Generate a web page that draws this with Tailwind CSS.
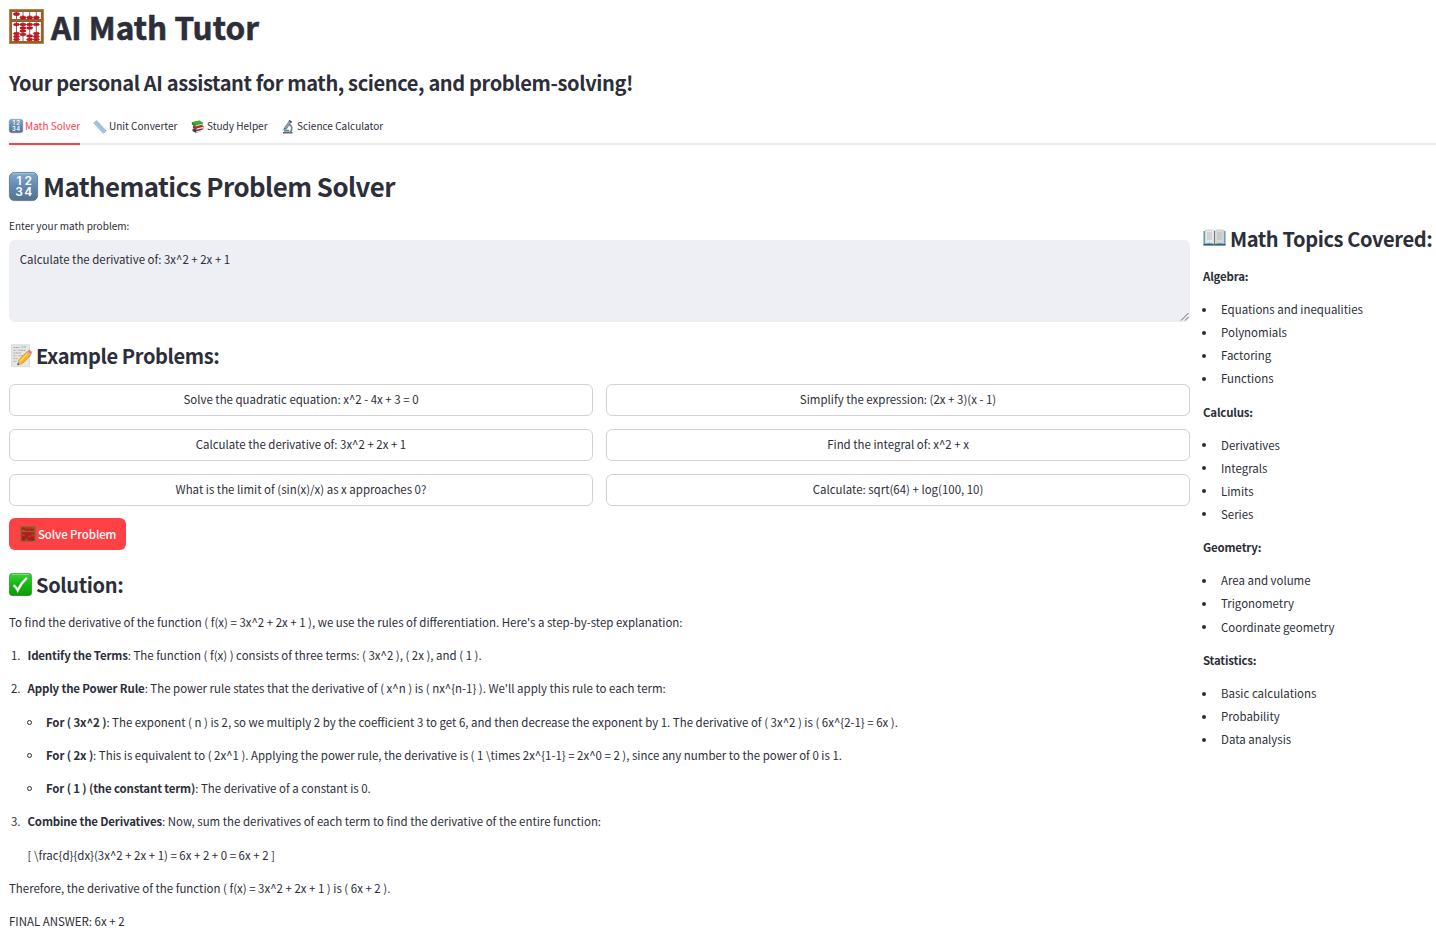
<!DOCTYPE html>
<html lang="en">
<head>
<meta charset="utf-8">
<title>AI Math Tutor</title>
<script src="https://cdn.jsdelivr.net/npm/@tailwindcss/browser@4"></script>
</head>
<body class="bg-white text-[#2c2e39] font-['Noto_Sans_CJK_SC','Noto_Sans_CJK_JP',sans-serif] text-[11.46px] leading-[20.48px] h-[937px] overflow-hidden">
<svg class="absolute size-0">
  <defs>
    <linearGradient id="blue" x2="0" y2="1"><stop stop-color="#82a9cc"/><stop offset=".5" stop-color="#6289ae"/><stop offset="1" stop-color="#56718e"/></linearGradient>
    <linearGradient id="green" x2="0" y2="1"><stop stop-color="#3fd13c"/><stop offset=".5" stop-color="#17b512"/><stop offset="1" stop-color="#0e9a0b"/></linearGradient>
  </defs>
  <symbol id="abacus" viewBox="0 0 35 35">
    <path d="M1.700 1.700h31.600v31.600H1.700zM2 11.500h31" fill="none" stroke="#96602b" stroke-width="2.800"/>
    <path d="M.5.500h34v34H.5z" fill="none" stroke="#b98346" stroke-width=".8"/>
    <path d="M7.500 3v29M14 3v29M20.700 3v29M27.300 3v29" stroke="#8a6a58" stroke-width="1"/>
    <g fill="#d5101c" stroke="#8f0811" stroke-width=".5">
      <ellipse cx="7.500" cy="5" rx="3.100" ry="1.600"/><ellipse cx="14" cy="8.500" rx="3.100" ry="1.600"/><ellipse cx="20.700" cy="8.500" rx="3.100" ry="1.600"/><ellipse cx="27.300" cy="8.500" rx="3.100" ry="1.600"/>
      <ellipse cx="7.500" cy="15.500" rx="3.100" ry="1.300"/><ellipse cx="7.500" cy="24.500" rx="3.100" ry="1.300"/><ellipse cx="7.500" cy="27.500" rx="3.100" ry="1.300"/><ellipse cx="7.500" cy="30.500" rx="3.100" ry="1.300"/>
      <ellipse cx="14" cy="15.500" rx="3.100" ry="1.300"/><ellipse cx="14" cy="19" rx="3.100" ry="1.300"/><ellipse cx="14" cy="22" rx="3.100" ry="1.300"/><ellipse cx="14" cy="25.500" rx="3.100" ry="1.300"/>
      <ellipse cx="20.700" cy="15.500" rx="3.100" ry="1.300"/><ellipse cx="20.700" cy="19" rx="3.100" ry="1.300"/><ellipse cx="20.700" cy="27" rx="3.100" ry="1.300"/><ellipse cx="20.700" cy="30.500" rx="3.100" ry="1.300"/>
      <ellipse cx="27.300" cy="15.500" rx="3.100" ry="1.300"/><ellipse cx="27.300" cy="24.500" rx="3.100" ry="1.300"/><ellipse cx="27.300" cy="27.500" rx="3.100" ry="1.300"/><ellipse cx="27.300" cy="30.500" rx="3.100" ry="1.300"/>
    </g>
  </symbol>
  <symbol id="numbers" viewBox="0 0 29 29" class="overflow-visible">
    <rect x=".4" y=".4" width="28.200" height="28.200" rx="5" fill="url(#blue)" stroke="#547493" stroke-width=".8"/>
    <path d="M3.500 1.700h22" stroke="#a4c1dc" stroke-width="1"/>
    <g fill="#fff" font-family="Inter" font-size="12" font-weight="600" text-anchor="middle"><text x="9.800" y="12.800">1</text><text x="19" y="12.800">2</text><text x="9.800" y="24">3</text><text x="19" y="24">4</text></g>
  </symbol>
  <symbol id="ruler" viewBox="0 0 14 14">
    <path d="M.5 3 3.700.500 13.500 11l-3.200 2.500z" fill="#a9c5e2" stroke="#8ea9c6" stroke-width=".5"/>
    <path d="m4 1.800-1.500 1.200M5.500 3.400 4.300 4.400M7 5 5.500 6.200M8.500 6.600l-1.200 1M10 8.200 8.500 9.400M11.500 9.800l-1.200 1" stroke="#7f9ab6" stroke-width=".4"/>
  </symbol>
  <symbol id="books" viewBox="0 0 14 14">
    <path d="m1.500 9 8-1.500 3 2.800-7.500 2.700-3.500-2z" fill="#3b4250"/><path d="m5 11.500 7-2v1.200l-7 2z" fill="#eee"/>
    <path d="m2 5.500 8-1.300 2.700 2.300v2L5.500 10.500 2 8z" fill="#c92132"/><path d="m5.500 8.500 7-1.700v1.200l-7 1.800z" fill="#fae8e3"/>
    <path d="m.8 2.200 7.500-1.700L12 2.800v2L4.500 7 .8 4.500z" fill="#2a8e2b"/><path d="m1 2.200 7.300-1.500 3.600 2.100-7.200 1.800z" fill="#4bac35"/><path d="m4.600 5.200 7.200-1.700v.9L4.600 6.300z" fill="#e1ead7"/>
  </symbol>
  <symbol id="microscope" viewBox="0 0 14 14">
    <path d="M2 12.800h9.500M3 10.800h5" stroke="#566570" stroke-width="1.600"/>
    <path d="M7.700 4.500c4 1 4 5.500 1 8" fill="none" stroke="#708592" stroke-width="1.700"/>
    <path d="m8 1.200 2 1.100-4.300 6.500-2.200-1.200z" fill="#8fa3ae" stroke="#4e5b66" stroke-width=".5"/>
    <path d="m7.900.500 2.900 1.600" stroke="#39434e" stroke-width="1.200"/><path d="m3.400 7.800-.9 1.500 1.500.7 1-1.400" fill="#46535d"/><path d="M1.700 9.900h5" stroke="#6eb3cf"/>
  </symbol>
  <symbol id="memo" viewBox="0 0 23 24">
    <path d="M2.500.700h18v22h-18z" fill="#e6e6e6" stroke="#ccc" stroke-width=".6"/>
    <path d="M4.500 3.500h6m2-.5h5M4.500 6.300h3m2 0h7M4.500 9h8M4.500 11.800h3m2 0h5M4.500 14.600h4M4.500 17.400h3" stroke="#a4a4a4" stroke-width="1" stroke-dasharray="2 .6"/>
    <path d="m8.500 21 1.200-5L18 7.500l4 3.700-8.500 8.300z" fill="#f6b51d" stroke="#b87b13" stroke-width=".5"/>
    <path d="m11 17.300 8.400-8.500" stroke="#ffdc54" stroke-width="1.500"/>
    <path d="m17.300 8.200 2-2c1.500-1 4.500 1.500 3.400 3.400l-1.800 2z" fill="#ed8078"/><path d="m17.300 8.200 1-1 3.700 3.500-1 1z" fill="#bac1c5"/>
    <path d="m8.500 21 1.200-5 3.800 3.500z" fill="#e4b477"/><path d="m8.500 21 .5-2 1.500 1.300z" fill="#333"/>
  </symbol>
  <symbol id="check" viewBox="0 0 23 23">
    <rect x=".3" y=".3" width="22.400" height="22.400" rx="3.500" fill="url(#green)" stroke="#0b9307" stroke-width=".6"/>
    <path d="M3 1.300h17" stroke="#90ea8c" stroke-width=".8"/>
    <path d="M4.500 12.200c1.700.9 3.100 2.500 4.200 5C11.200 12 14 8.200 17.800 4.800" fill="none" stroke="#fff" stroke-width="2.300"/>
  </symbol>
  <symbol id="book" viewBox="0 0 23 17">
    <path d="M.5 2h22v14.300h-22z" fill="#4f94b4"/><path d="M.5 15h22v1.500h-22z" fill="#315f7b"/>
    <path d="M2 1.500C5.500.300 9 .500 11.500 2v13C8.500 13.700 5 13.700 2 14.500z" fill="#e6e6e4" stroke="#bbb" stroke-width=".5"/>
    <path d="M21 1.500C17.500.300 14 .500 11.500 2v13c3-1.300 6.500-1.300 9.500-.5z" fill="#d8d8d7" stroke="#bbb" stroke-width=".5"/>
    <path d="M4 4h5M4 6h5M4 8h5M4 10h5M14 4h5M14 6h5M14 8h5M14 10h5" stroke="#b0b0b0" stroke-width=".7"/><path d="M11.500 2v13.500" stroke="#777" stroke-width="1"/>
  </symbol>
</svg>

<main class="pl-[9px] flex flex-col">
  <h1 class="h-[56px] flex items-center gap-[7px] text-[31.5px] font-bold tracking-[0.03px] whitespace-nowrap [-webkit-text-stroke:0.6px_#2c2e39]"><svg class="size-[35px] shrink-0 mb-[3px]"><use href="#abacus"/></svg><span class="mb-[3px]">AI Math Tutor</span></h1>
  <h3 class="h-[56px] pb-px flex items-center text-[20.06px] font-semibold tracking-[-0.385px] whitespace-nowrap">Your personal AI assistant for math, science, and problem-solving!</h3>
  <nav class="h-[33px] border-b-2 border-[#e9e9eb] flex gap-[13px] text-[10.03px] whitespace-nowrap">
    <a class="w-[71px] h-[33px] border-b-2 border-[#fd4144] text-[#fd4144] flex items-center gap-[2px] pb-[3px]"><svg class="size-[14px] shrink-0 overflow-visible"><use href="#numbers"/></svg>Math Solver</a>
    <a class="w-[85px] h-[31px] pb-[2px] flex items-center gap-[2px]"><svg class="size-[14px] shrink-0"><use href="#ruler"/></svg>Unit Converter</a>
    <a class="w-[77px] h-[31px] pb-[2px] flex items-center gap-[2px]"><svg class="size-[14px] shrink-0"><use href="#books"/></svg>Study Helper</a>
    <a class="h-[31px] pb-[2px] flex items-center gap-[2px]"><svg class="size-[14px] shrink-0"><use href="#microscope"/></svg>Science Calculator</a>
  </nav>
  <h2 class="mt-[14px] h-[57px] pb-[2px] flex items-center gap-[5px] text-[25.79px] font-semibold tracking-[-0.52px] whitespace-nowrap"><svg class="size-[29px] shrink-0 mb-px overflow-visible"><use href="#numbers"/></svg><span>Mathematics Problem Solver</span></h2>

  <div class="flex gap-[13px]">
    <section class="w-[1181px] shrink-0">
      <label class="block h-[24px] text-[10.03px] leading-[20px]">Enter your math problem:</label>
      <div class="relative h-[82px] rounded-[6px] bg-[#eeeff4] px-[10.7px] py-[9px]">Calculate the derivative of: 3x^2 + 2x + 1
        <svg class="absolute right-0 bottom-0 size-[11px]" viewBox="0 0 11 11"><path d="M2 9.500 9.500 2M6 9.500 9.500 6" stroke="#555" stroke-width=".9"/></svg>
      </div>
      <h3 class="h-[62px] pt-[6px] flex items-center gap-[4px] text-[20.06px] font-semibold tracking-[-0.4px]"><svg class="w-[23px] h-[24px]"><use href="#memo"/></svg><span>Example Problems:</span></h3>
      <div class="grid grid-cols-2 gap-[13px] text-center leading-[28px]">
        <button class="h-8 pb-[1.5px] rounded-[6px] border border-[#d2d2d4]">Solve the quadratic equation: x^2 - 4x + 3 = 0</button>
        <button class="h-8 pb-[1.5px] rounded-[6px] border border-[#d2d2d4]">Simplify the expression: (2x + 3)(x - 1)</button>
        <button class="h-8 pb-[1.5px] rounded-[6px] border border-[#d2d2d4]">Calculate the derivative of: 3x^2 + 2x + 1</button>
        <button class="h-8 pb-[1.5px] rounded-[6px] border border-[#d2d2d4]">Find the integral of: x^2 + x</button>
        <button class="h-8 pb-[2px] rounded-[6px] border border-[#d2d2d4]">What is the limit of (sin(x)/x) as x approaches 0?</button>
        <button class="h-8 pb-[2px] rounded-[6px] border border-[#d2d2d4]">Calculate: sqrt(64) + log(100, 10)</button>
      </div>
      <button class="mt-3 w-[117px] h-8 pl-[11px] rounded-[6px] bg-[#fd4144] text-white font-medium tracking-[-0.1px] flex items-center gap-[2px] whitespace-nowrap"><svg class="size-4 shrink-0"><rect width="16" height="16" fill="#a43b25"/><use href="#abacus" width="16" height="16"/></svg><span>Solve Problem</span></button>
      <h3 class="h-[56px] pt-[14px] flex items-center gap-[4px] text-[20.06px] font-semibold tracking-[-0.35px]"><svg class="size-[23px] mb-[2px]"><use href="#check"/></svg><span>Solution:</span></h3>
      <div class="-mt-[0.3px] leading-[33.28px] whitespace-nowrap">
        <p>To find the derivative of the function ( f(x) = 3x^2 + 2x + 1 ), we use the rules of differentiation. Here's a step-by-step explanation:</p>
        <div class="grid grid-cols-[18.500px_1fr]">
          <span class="pl-[2px]">1.</span><p><b class="tracking-[-0.15px]">Identify the Terms</b>: The function ( f(x) ) consists of three terms: ( 3x^2 ), ( 2x ), and ( 1 ).</p>
          <span class="pl-[2px]">2.</span><p><b class="tracking-[-0.15px]">Apply the Power Rule</b>: The power rule states that the derivative of ( x^n ) is ( nx^{n-1} ). We'll apply this rule to each term:</p>
        </div>
        <ul class="pl-[18px]">
          <li class="flex items-center gap-[14px]"><i class="size-[5px] rounded-full border border-[#2c2e39]"></i><p><b class="tracking-[-0.12px]">For ( 3x^2 )</b>: The exponent ( n ) is 2, so we multiply 2 by the coefficient 3 to get 6, and then decrease the exponent by 1. The derivative of ( 3x^2 ) is ( 6x^{2-1} = 6x ).</p></li>
          <li class="flex items-center gap-[14px]"><i class="size-[5px] rounded-full border border-[#2c2e39]"></i><p><b class="tracking-[-0.12px]">For ( 2x )</b>: This is equivalent to ( 2x^1 ). Applying the power rule, the derivative is ( 1 \times 2x^{1-1} = 2x^0 = 2 ), since any number to the power of 0 is 1.</p></li>
          <li class="flex items-center gap-[14px]"><i class="size-[5px] rounded-full border border-[#2c2e39]"></i><p><b class="tracking-[-0.15px]">For ( 1 ) (the constant term)</b>: The derivative of a constant is 0.</p></li>
        </ul>
        <div class="grid grid-cols-[18.500px_1fr]">
          <span class="pl-[2px]">3.</span><p><b class="tracking-[-0.15px]">Combine the Derivatives</b>: Now, sum the derivatives of each term to find the derivative of the entire function:</p>
          <p class="col-start-2">[ \frac{d}{dx}(3x^2 + 2x + 1) = 6x + 2 + 0 = 6x + 2 ]</p>
        </div>
        <p>Therefore, the derivative of the function ( f(x) = 3x^2 + 2x + 1 ) is ( 6x + 2 ).</p>
        <p>FINAL ANSWER: 6x + 2</p>
      </div>
    </section>

    <aside class="whitespace-nowrap [&_li]:flex [&_li]:items-center [&_li]:gap-[15px] [&_ul]:-ml-px [&_i]:size-1 [&_i]:rounded-full [&_i]:bg-[#2c2e39]">
      <h3 class="h-[50px] pb-[4px] flex items-center gap-[4px] text-[20.06px] font-semibold tracking-[-0.38px]"><svg class="w-[23px] h-[17px] shrink-0 mb-[3px]"><use href="#book"/></svg><span>Math Topics Covered:</span></h3>
      <p class="mb-[11.520px] font-bold tracking-[-0.18px]">Algebra:</p>
      <ul class="mb-[11.520px] leading-[23.040px]"><li><i></i>Equations and inequalities</li><li><i></i>Polynomials</li><li><i></i>Factoring</li><li><i></i>Functions</li></ul>
      <p class="mb-[11.520px] font-bold tracking-[-0.18px]">Calculus:</p>
      <ul class="mb-[11.520px] leading-[23.040px]"><li><i></i>Derivatives</li><li><i></i>Integrals</li><li><i></i>Limits</li><li><i></i>Series</li></ul>
      <p class="mb-[11.520px] font-bold tracking-[-0.18px]">Geometry:</p>
      <ul class="mb-[11.520px] leading-[23.040px]"><li><i></i>Area and volume</li><li><i></i>Trigonometry</li><li><i></i>Coordinate geometry</li></ul>
      <p class="mb-[11.520px] font-bold tracking-[-0.18px]">Statistics:</p>
      <ul class="leading-[23.040px]"><li><i></i>Basic calculations</li><li><i></i>Probability</li><li><i></i>Data analysis</li></ul>
    </aside>
  </div>
</main>
</body>
</html>
